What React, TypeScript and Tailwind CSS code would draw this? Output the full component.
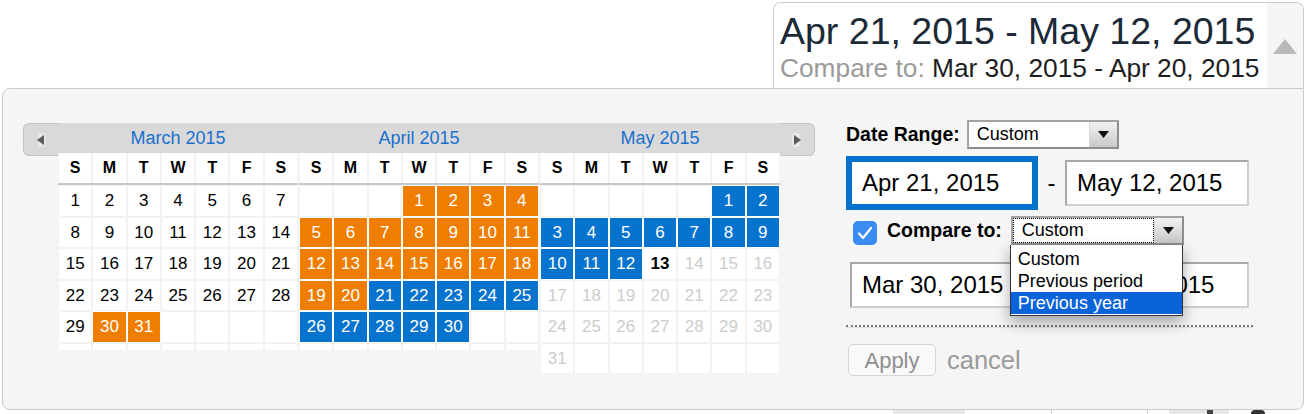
import React from 'react'

type Kind = 'plain' | 'orange' | 'blue' | 'today' | 'future'

const kindClass: Record<Kind, string> = {
  plain: 'bg-white border-[#f2f2f2] text-black',
  orange: 'bg-[#ef7d00] border-white text-white',
  blue: 'bg-[#0673cf] border-white text-white',
  today: 'bg-white border-[#f2f2f2] text-black font-bold',
  future: 'bg-white border-[#f2f2f2] text-[#cdcdcd]',
}

const months = [
  {
    title: 'March 2015',
    first: 0,
    days: 31,
    kind: (d: number): Kind => (d >= 30 ? 'orange' : 'plain'),
  },
  {
    title: 'April 2015',
    first: 3,
    days: 30,
    kind: (d: number): Kind => (d <= 20 ? 'orange' : 'blue'),
  },
  {
    title: 'May 2015',
    first: 5,
    days: 31,
    kind: (d: number): Kind => (d <= 12 ? 'blue' : d === 13 ? 'today' : 'future'),
  },
]

const weekdays = ['S', 'M', 'T', 'W', 'T', 'F', 'S']

const buildWeeks = (first: number, days: number) => {
  const cells: (number | null)[] = []
  for (let i = 0; i < first; i++) cells.push(null)
  for (let d = 1; d <= days; d++) cells.push(d)
  while (cells.length < 42) cells.push(null)
  const rows: (number | null)[][] = []
  for (let i = 0; i < 42; i += 7) rows.push(cells.slice(i, i + 7))
  return rows
}

const Month = ({ month }: { month: (typeof months)[number] }) => {
  const rows = buildWeeks(month.first, month.days)
  return (
    <div className="w-[240px]">
      <div className="grid grid-cols-7 border-b-2 border-[#c8c8c8]">
        {weekdays.map((l, i) => (
          <div
            key={i}
            className="h-[30px] flex items-center justify-center bg-white border-x border-[#f2f2f2] text-[16px] font-bold text-black"
          >
            {l}
          </div>
        ))}
      </div>
      {rows.map((row, r) => {
        const empty = row.every((c) => c === null)
        return (
          <div key={r} className="grid grid-cols-7">
            {row.map((d, i) => (
              <div
                key={i}
                className={`${empty ? 'h-[8px]' : 'h-[31.5px]'} flex items-center justify-center border text-[17px] ${
                  d === null ? kindClass.plain : kindClass[month.kind(d)]
                }`}
              >
                {d}
              </div>
            ))}
          </div>
        )
      })}
    </div>
  )
}

const NavButton = ({ dir }: { dir: 'left' | 'right' }) => (
  <div
    className={`w-[35px] h-[33px] bg-[#d9d9d9] border border-[#c4c4c4] flex items-center justify-center ${
      dir === 'left' ? 'rounded-l-[6px] border-r-0' : 'rounded-r-[6px] border-l-0'
    }`}
  >
    <svg width="12" height="16" viewBox="0 0 12 16">
      {dir === 'left' ? (
        <>
          <rect x="3" y="1" width="8" height="14" rx="4" fill="#e8e8e8" />
          <path d="M9 3 L2 8 L9 13 Z" fill="#5c5c5c" />
        </>
      ) : (
        <>
          <rect x="1" y="1" width="8" height="14" rx="4" fill="#e8e8e8" />
          <path d="M3 3 L10 8 L3 13 Z" fill="#5c5c5c" />
        </>
      )}
    </svg>
  </div>
)

const SelectArrow = () => (
  <svg width="11" height="7" viewBox="0 0 11 7">
    <path d="M0 0 L11 0 L5.5 7 Z" fill="#111" />
  </svg>
)

const Select = ({ width, focused }: { width: string; focused?: boolean }) => (
  <div
    className={`${width} h-[29px] flex bg-white border-2 border-[#a3a3a3] border-b-[#8e8e8e] border-r-[#8e8e8e]`}
  >
    <div
      className={`flex-1 flex items-center pl-[8px] text-[18px] text-black ${
        focused ? 'border border-dotted border-black' : ''
      }`}
    >
      Custom
    </div>
    <div className="w-[28px] flex items-center justify-center bg-gradient-to-b from-[#f2f2f2] to-[#c9c9c9] border-l border-[#d8d8d8]">
      <SelectArrow />
    </div>
  </div>
)

const DateInput = ({ value }: { value: string }) => (
  <div className="w-[184px] h-[46px] flex items-center bg-white border-2 border-[#a8a8a8] border-b-[#cfcfcf] border-r-[#cfcfcf] pl-[10px] text-[24px] text-black whitespace-nowrap overflow-hidden">
    {value}
  </div>
)

const App = () => {
  return (
    <div className="w-[1306px] h-[414px] overflow-hidden bg-white font-['Liberation_Sans',Arial,sans-serif]">
      {/* summary box */}
      <div className="flex justify-end pr-[2px] pt-[2px]">
        <div className="w-[531px] h-[86px] flex border border-b-0 border-[#cbcbcb] rounded-t-[8px] overflow-hidden">
          <div className="flex-1 bg-white pl-[6px] pt-[8px]">
            <div className="text-[37.5px] leading-[40px] text-[#1c2a38] whitespace-nowrap">
              Apr 21, 2015 - May 12, 2015
            </div>
            <div className="mt-[3px] text-[26.3px] leading-[28px] whitespace-nowrap">
              <span className="text-[#9a9a9a]">Compare to:</span>{' '}
              <span className="text-[#1e1e1e]">Mar 30, 2015 - Apr 20, 2015</span>
            </div>
          </div>
          <div className="w-[36px] bg-[#f5f5f5] flex justify-center pt-[36px]">
            <svg width="24" height="15" viewBox="0 0 24 15">
              <path d="M12 0 L24 15 L0 15 Z" fill="#b9b9b9" />
            </svg>
          </div>
        </div>
      </div>

      {/* picker panel */}
      <div className="mx-[2px] h-[322px] flex bg-[#f5f5f5] border border-[#c9c9c9] rounded-tl-[8px] rounded-b-[8px] pl-[20px] pt-[31px]">
        {/* calendars */}
        <div className="mt-[3px] flex items-start">
          <NavButton dir="left" />
          <div className="flex flex-col">
            <div className="h-[30px] flex gap-x-[1px] bg-[#d9d9d9]">
              {months.map((m) => (
                <div
                  key={m.title}
                  className="w-[240px] flex items-center justify-center text-[18px] text-[#1a6fcf]"
                >
                  {m.title}
                </div>
              ))}
            </div>
            <div className="flex items-start gap-x-[1px]">
              {months.map((m) => (
                <Month key={m.title} month={m} />
              ))}
            </div>
          </div>
          <NavButton dir="right" />
        </div>

        {/* range form */}
        <div className="ml-[31px] w-[407px] flex flex-col">
          <div className="h-[29px] flex items-center">
            <span className="text-[19.5px] font-bold text-black">Date Range:</span>
            <div className="ml-[7px]">
              <Select width="w-[152px]" />
            </div>
          </div>

          <div className="mt-[7px] flex items-center">
            <div className="w-[192px] h-[54px] flex items-center bg-white border-[6px] border-[#0572cd] pl-[10px] text-[24px] text-black whitespace-nowrap">
              Apr 21, 2015
            </div>
            <div className="w-[27px] text-center text-[24px] text-black">-</div>
            <DateInput value="May 12, 2015" />
          </div>

          <div className="mt-[6px] h-[29px] flex items-center">
            <div className="ml-[7px] w-[24px] h-[24px] mt-[5px] rounded-[5px] bg-[#3a8cf2] flex items-center justify-center">
              <svg width="16" height="14" viewBox="0 0 16 14">
                <path d="M2 7.5 L6 12 L14 2" fill="none" stroke="#fff" strokeWidth="2.2" strokeLinecap="round" strokeLinejoin="round" />
              </svg>
            </div>
            <span className="ml-[10px] text-[19.5px] font-bold text-black">Compare to:</span>
            <div className="relative ml-[9px]">
              <Select width="w-[173px]" focused />
              <div className="absolute left-[-1px] top-[29px] w-[173px] z-10 bg-white border border-t-0 border-[#333] pt-[3px] pb-[1px] shadow-[0_6px_14px_rgba(0,0,0,0.35)] text-[18px]">
                <div className="h-[22px] flex items-center pl-[7px] text-black">Custom</div>
                <div className="h-[22px] flex items-center pl-[7px] text-black">Previous period</div>
                <div className="h-[22px] flex items-center pl-[7px] bg-[#0a63d8] text-white">Previous year</div>
              </div>
            </div>
          </div>

          <div className="mt-[17px] ml-[4px] flex items-center">
            <DateInput value="Mar 30, 2015" />
            <div className="w-[31px] text-center text-[24px] text-black">-</div>
            <DateInput value="Apr 20, 2015" />
          </div>

          <div className="mt-[17px] w-[407px] border-b-2 border-dotted border-[#7a7a7a]" />
          <div className="w-[407px] border-b border-[#e2e2e2]" />

          <div className="mt-[13px] flex items-center">
            <div className="ml-[2px] w-[88px] h-[32px] flex items-center justify-center rounded-[5px] border border-[#d6d6d6] bg-[#f9f9f9] text-[22px] text-[#8f8f8f]">
              Apply
            </div>
            <span className="ml-[11px] text-[25.5px] text-[#9a9a9a]">cancel</span>
          </div>
        </div>
      </div>

      {/* page content peeking below */}
      <div className="h-[4px] flex">
        <div className="ml-[893px] w-[72px] bg-[#e6e6e6]" />
        <div className="ml-[86px] w-[1px] bg-[#cfcfcf]" />
        <div className="ml-[95px] w-[1px] bg-[#cfcfcf]" />
        <div className="ml-[21px] w-[60px] bg-[#e6e6e6]" />
        <div className="ml-[-22px] w-[6px] bg-[#444]" />
        <div className="ml-[38px] w-[14px] rounded-t-full bg-[#333]" />
      </div>
    </div>
  )
}

export default App
